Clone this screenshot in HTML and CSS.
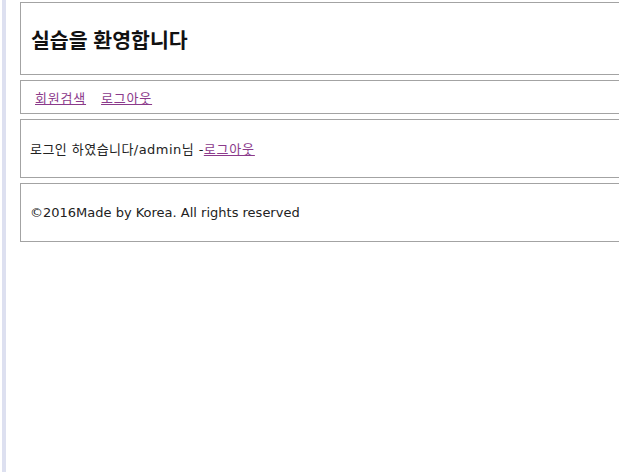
FILE: index.html
```html
<!DOCTYPE html>
<html lang="ko">
<head>
<meta charset="utf-8">
<title>실습</title>
<link rel="stylesheet" href="styles.css">
</head>
<body>
<div class="frame">
  <div class="page">
    <header class="box box-head">
      <h1 class="title">실습을 환영합니다</h1>
    </header>
    <nav class="box box-nav">
      <a class="link" href="#">회원검색</a>
      <a class="link" href="#">로그아웃</a>
    </nav>
    <section class="box box-main">
      <p class="msg">로그인 하였습니다/admin님 -<a class="link" href="#">로그아웃</a></p>
    </section>
    <footer class="box box-foot">
      <p class="copy">©2016Made by Korea. All rights reserved</p>
    </footer>
  </div>
</div>
</body>
</html>
```
FILE: styles.css
```css
html, body {
  margin: 0;
  padding: 0;
  background: #fff;
  overflow: hidden;
}
body {
  width: 619px;
  height: 472px;
  font-family: "DejaVu Sans", "Noto Sans CJK KR", sans-serif;
  font-size: 13px;
  color: #222;
}
.frame {
  margin-left: 2px;
  border-left: 4px solid #dde0f0;
  height: 472px;
  box-sizing: border-box;
  padding-left: 14px;
  padding-top: 2px;
  overflow: hidden;
}
.page {
  width: 620px;
  display: flex;
  flex-direction: column;
  gap: 5px;
}
.box {
  border: 1px solid #a3a3a3;
  display: flex;
  align-items: center;
  padding-left: 10px;
  box-sizing: border-box;
}
.box-head { height: 73px; }
.box-nav { height: 34px; padding-left: 14px; gap: 15px; }
.box-main { height: 59px; padding-left: 9px; }
.box-foot { height: 59px; padding-left: 9px; }
.title {
  margin: 0;
  font-family: "Noto Sans CJK KR", sans-serif;
  font-size: 20.5px;
  font-weight: bold;
  color: #111;
  line-height: 26px;
}
.link {
  color: #8b3a8b;
  text-decoration: underline;
  font-family: "Noto Sans CJK KR", sans-serif;
  font-size: 13px;
  letter-spacing: 0.8px;
}
.msg, .copy {
  margin: 0;
  font-size: 13px;
  color: #222;
}
.msg {
  font-family: "DejaVu Sans", "Noto Sans CJK KR", sans-serif;
  letter-spacing: 0.45px;
}
```
